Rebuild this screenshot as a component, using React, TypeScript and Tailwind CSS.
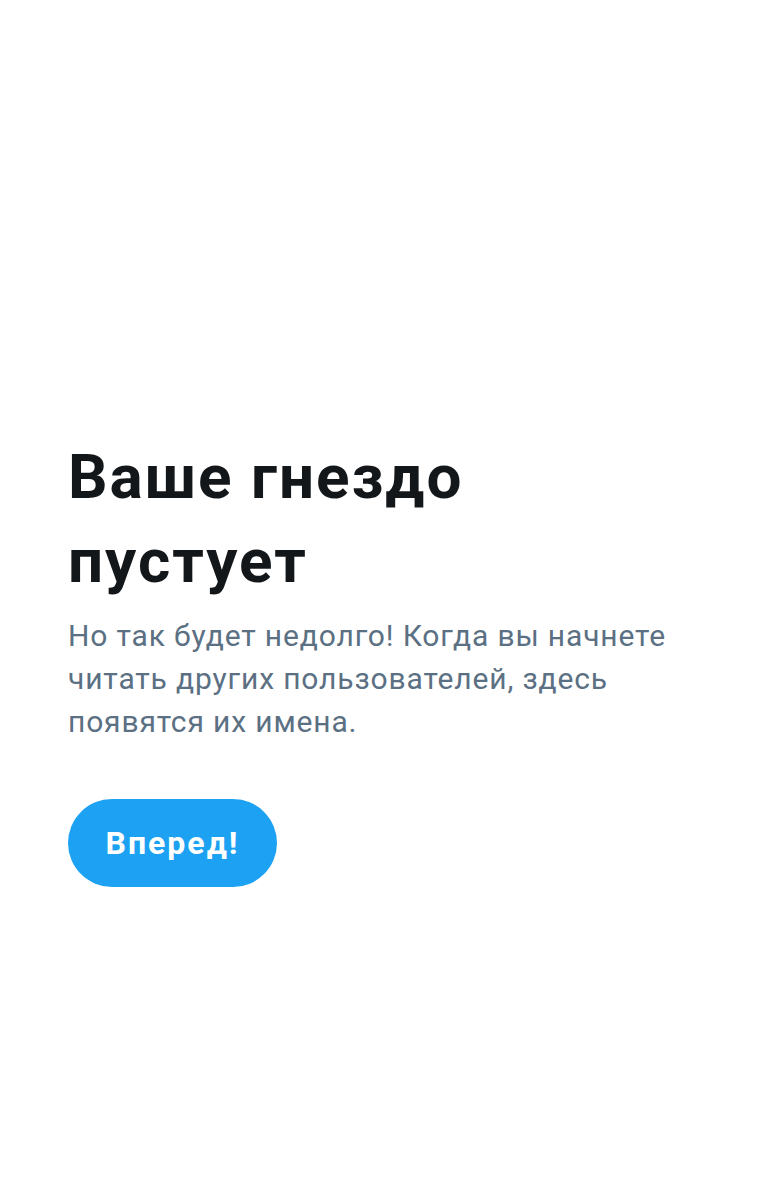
export default function App() {
    return (
        <div className="min-h-[1200px] w-full bg-white font-['Roboto',sans-serif] flex flex-col px-[68px] pt-[435px]">
            <h1 className="text-[62px] leading-[84px] font-bold text-[#14171a] tracking-[2px]">
                Ваше гнездо
                <br />
                пустует
            </h1>
            <p className="mt-[11px] text-[30px] leading-[43px] text-[#5b7083] tracking-[0.85px] max-w-[620px]">
                Но так будет недолго! Когда вы начнете читать других пользователей, здесь появятся их имена.
            </p>
            <div className="mt-[56px]">
                <button className="h-[88px] w-[209px] rounded-full bg-[#1da1f2] text-white text-[32px] font-bold tracking-[2px]">
                    Вперед!
                </button>
            </div>
        </div>
    );
}
